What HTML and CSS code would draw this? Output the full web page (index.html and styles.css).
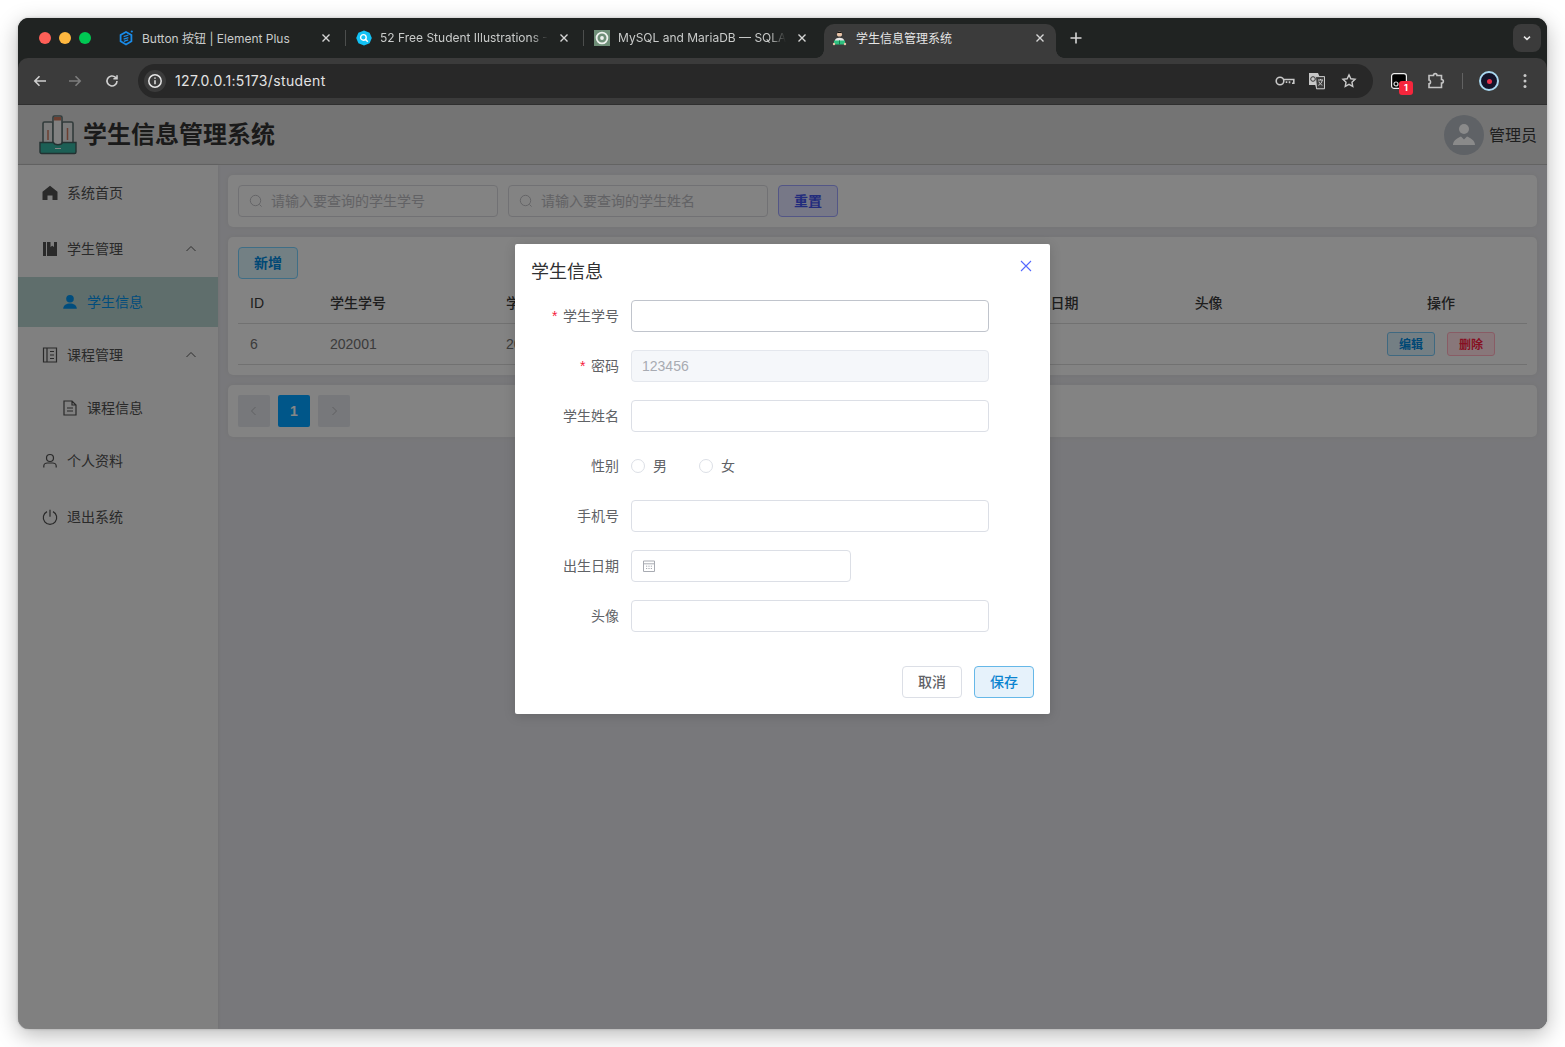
FILE: index.html
```html
<!DOCTYPE html>
<html lang="zh-CN">
<head>
<meta charset="utf-8">
<title>学生信息管理系统</title>
<link rel="stylesheet" href="styles.css">
</head>
<body>
<div class="window">
  <div class="tabstrip">
    <div class="lights"><i class="light red"></i><i class="light yellow"></i><i class="light green"></i></div>
    <div class="tab divided">
      <svg class="fav" viewBox="0 0 16 16"><path d="M8 2 13.400 5v6.200L8 14.400 2.600 11.200V5z" fill="none" stroke="#1a8be8" stroke-width="1.800"/><path d="M5.600 6.600 10.400 5M5.600 9.200l4.800-1.600M5.800 11.400l4.400-1.600" stroke="#1a8be8" stroke-width="1.300" fill="none"/><circle cx="13.800" cy="1.500" r="1.100" fill="#1a8be8"/></svg>
      <span class="tab-title">Button 按钮 | Element Plus</span>
      <svg class="tab-x" viewBox="0 0 16 16"><path d="M4.500 4.500l7 7M11.500 4.500l-7 7"/></svg>
    </div>
    <div class="tab divided">
      <svg class="fav" viewBox="0 0 16 16"><path d="M8 .5 13.600 2.800 15.800 8 13.600 13.200 8 15.500 2.400 13.200.2 8 2.400 2.800z" fill="#12c2f5"/><circle cx="7.400" cy="7.400" r="2.800" fill="none" stroke="#fff" stroke-width="1.400"/><path d="M9.600 9.600l2.200 2.200" stroke="#fff" stroke-width="1.400"/></svg>
      <span class="tab-title fade">52 Free Student Illustrations - Download</span>
      <svg class="tab-x" viewBox="0 0 16 16"><path d="M4.500 4.500l7 7M11.500 4.500l-7 7"/></svg>
    </div>
    <div class="tab">
      <svg class="fav" viewBox="0 0 16 16"><rect width="16" height="16" fill="#6f8f78"/><circle cx="8" cy="8" r="5.400" fill="none" stroke="#eef2ee" stroke-width="1.800"/><circle cx="8" cy="8" r="1.900" fill="#eef2ee"/></svg>
      <span class="tab-title fade">MySQL and MariaDB — SQLAlchemy</span>
      <svg class="tab-x" viewBox="0 0 16 16"><path d="M4.500 4.500l7 7M11.500 4.500l-7 7"/></svg>
    </div>
    <div class="tab active">
      <svg class="fav" viewBox="0 0 16 16"><circle cx="7.500" cy="4" r="2.600" fill="#e8c4a8"/><path d="M4.600 3.600C4.600 1 10.400 1 10.400 3.600L9 2.900H6z" fill="#111"/><path d="M3 10c1-3 8-3 9 0v1H3z" fill="#e8e8e8"/><path d="M2 10.400h11v4H2z" fill="#2fbf7f"/><path d="M7.500 10.400v4" stroke="#147a4c"/><circle cx="2" cy="14" r="1.200" fill="#e8c4a8"/><circle cx="13" cy="14" r="1.200" fill="#e8c4a8"/></svg>
      <span class="tab-title">学生信息管理系统</span>
      <svg class="tab-x" viewBox="0 0 16 16"><path d="M4.500 4.500l7 7M11.500 4.500l-7 7"/></svg>
    </div>
    <svg class="newtab" viewBox="0 0 16 16"><path d="M8 2.500v11M2.500 8h11"/></svg>
    <div class="tabsearch"><svg viewBox="0 0 12 12"><path d="M3 4.600 6 7.400l3-2.800"/></svg></div>
  </div>

  <div class="toolbar">
    <svg class="tool first" viewBox="0 0 16 16"><path d="M14 8H3M7.500 3.200 2.800 8l4.700 4.800"/></svg>
    <svg class="tool dim" viewBox="0 0 16 16"><path d="M2 8h11M8.500 3.200 13.200 8l-4.700 4.800"/></svg>
    <svg class="tool" viewBox="0 0 16 16"><path d="M13 8a5 5 0 1 1-1.500-3.600L13 5.800M13 2.200v3.600H9.400"/></svg>
    <div class="omnibox">
      <span class="site-info"><svg viewBox="0 0 16 16"><circle cx="8" cy="8" r="6.200"/><path d="M8 7.200v4M8 4.400v1.400"/></svg></span>
      <span class="url">127.0.0.1:5173/student</span>
      <svg class="omni-key" viewBox="0 0 20 12"><circle cx="5" cy="6" r="3.800"/><path d="M8.800 4.500H18.800V8.200H17M14.500 8.200V6.200M11.500 8V6.200"/></svg>
      <svg class="omni-tr" viewBox="0 0 18 18"><path d="M1 1h9l1.500 3.600H16.500v12.200H8.500L7.300 13H1z" fill="#c8c8c8" stroke="none"/><path d="M7.500 4.600h9v12.200H8.500z" fill="#3b3b3b" stroke="#c8c8c8"/><circle cx="5" cy="7" r="2.300" stroke="#333" fill="none"/><path d="M10 8h5M12.500 7v1M14.300 8c-.5 3-2.300 4.600-4 5.300M10.900 9.600c.8 2 2 3 3.500 3.600" stroke="#c8c8c8" stroke-width="1" fill="none"/></svg>
      <svg class="omni-star" viewBox="0 0 16 16"><path d="M8 1.900l1.850 3.900 4.200.55-3.100 2.900.8 4.200L8 11.400l-3.750 2.050.8-4.200-3.100-2.900 4.200-.55z"/></svg>
    </div>
    <div class="ext">
      <svg class="ext-icon" viewBox="0 0 16 16"><rect x=".6" y=".6" width="14.800" height="14.800" rx="2.500" fill="#000" stroke="#eee" stroke-width="1.200"/><circle cx="5" cy="11" r="2" fill="none" stroke="#ddd" stroke-width="1.200"/></svg>
      <span class="badge">1</span>
    </div>
    <svg class="puzzle" viewBox="0 0 18 18"><path d="M2 3.500h4.500C6.500 1 10 1 10 3.500H14.500V7.500C17 7.500 17 11 14.500 11V15.500H2V11.800C4 11.800 4 8 2 8z"/></svg>
    <i class="tool-sep"></i>
    <span class="profile"><i></i></span>
    <svg class="kebab" viewBox="0 0 4 16"><circle cx="2" cy="2.500" r="1.500"/><circle cx="2" cy="8" r="1.500"/><circle cx="2" cy="13.500" r="1.500"/></svg>
  </div>

  <div class="app">
    <header class="app-header">
      <svg class="logo" viewBox="0 0 38 40">
        <g stroke="#546464" stroke-width="1.600">
          <rect x="4" y="7" width="10" height="24" rx="1.500" fill="#cdcdcd"/>
          <rect x="23" y="7" width="11" height="24" rx="1.500" fill="#cdcdcd"/>
          <rect x="14" y="1" width="9" height="30" rx="1.500" fill="#d8d8d8"/>
        </g>
        <rect x="15" y="2" width="7" height="3.500" fill="#b26a52"/>
        <path d="M9 15v10M28.500 13v12" stroke="#b26a52" stroke-width="1.500"/>
        <path d="M1 27.500h13.500c1 3 8 3 9 0H37V37a1.500 1.500 0 0 1-1.500 1.500h-33A1.500 1.500 0 0 1 1 37z" fill="#2f9f8e" stroke="#3a5252" stroke-width="1.400"/>
        <path d="M16 33.500h6" stroke="#dcdcdc" stroke-width="1.200"/>
      </svg>
      <h1 class="app-title">学生信息管理系统</h1>
      <div class="user">
        <span class="avatar"><svg viewBox="0 0 40 40"><circle cx="20" cy="14" r="5" /><path d="M9 30c0-5 5-7 8-8.500l3 3 3-3c3 1.500 8 3.500 8 8.500z"/></svg></span>
        <span class="user-name">管理员</span>
      </div>
    </header>
    <div class="app-body">
      <nav class="sidebar">
        <a class="menu-item">
          <svg class="mi" viewBox="0 0 16 16"><path class="solid" d="M8 .8 15.500 6.800V15h-5v-4.500h-5V15h-5V6.800z"/></svg>
          <span>系统首页</span>
        </a>
        <a class="menu-item">
          <svg class="mi" viewBox="0 0 16 16"><path class="solid" d="M1 1h3v14H1zM5 1h3.500v5l1.750-1.200L12 6V1h3v14H5z"/></svg>
          <span>学生管理</span>
          <svg class="arrow" viewBox="0 0 12 12"><path d="M1.500 8 6 3.500 10.500 8"/></svg>
        </a>
        <a class="menu-item sub active">
          <svg class="mi" viewBox="0 0 16 16"><circle class="solid" cx="8" cy="4.800" r="3.800"/><path class="solid" d="M1.200 14.800c0-7 13.600-7 13.600 0z"/></svg>
          <span>学生信息</span>
        </a>
        <a class="menu-item">
          <svg class="mi" viewBox="0 0 16 16"><path class="line" d="M1.500 1h13v14h-13zM5 1v14M8 4.500h4M8 8h4M8 11.500h4"/></svg>
          <span>课程管理</span>
          <svg class="arrow" viewBox="0 0 12 12"><path d="M1.500 8 6 3.500 10.500 8"/></svg>
        </a>
        <a class="menu-item sub">
          <svg class="mi" viewBox="0 0 16 16"><path class="line" d="M2 1h8l4 4v10H2zM10 1v4h4M5 8h6M5 11h6"/></svg>
          <span>课程信息</span>
        </a>
        <a class="menu-item">
          <svg class="mi" viewBox="0 0 16 16"><circle class="line" cx="8" cy="5" r="3.500"/><path class="line" d="M1.800 14.500V13c0-2 2-3 3.500-3h5.400c1.500 0 3.500 1 3.500 3v1.500"/></svg>
          <span>个人资料</span>
        </a>
        <a class="menu-item">
          <svg class="mi" viewBox="0 0 16 16"><path class="line" d="M5 2.600a6.700 6.700 0 1 0 6 0M8 .8v7"/></svg>
          <span>退出系统</span>
        </a>
      </nav>
      <main class="content">
        <section class="card search-card">
          <label class="search-box">
            <svg viewBox="0 0 14 14"><circle cx="6.500" cy="6.500" r="5.200"/><path d="M10.400 10.400l2.200 2.200"/></svg>
            <span>请输入要查询的学生学号</span>
          </label>
          <label class="search-box">
            <svg viewBox="0 0 14 14"><circle cx="6.500" cy="6.500" r="5.200"/><path d="M10.400 10.400l2.200 2.200"/></svg>
            <span>请输入要查询的学生姓名</span>
          </label>
          <button class="btn-reset">重置</button>
        </section>
        <section class="card table-card">
          <button class="btn-add">新增</button>
          <table class="grid">
            <colgroup><col class="c-id"><col class="c-no"><col class="c-n"><col class="c-n"><col class="c-n"><col class="c-n"><col class="c-n"><col class="c-n"></colgroup>
            <thead>
              <tr><th class="latin">ID</th><th>学生学号</th><th>学生姓名</th><th>性别</th><th>手机号</th><th>出生日期</th><th>头像</th><th class="center">操作</th></tr>
            </thead>
            <tbody>
              <tr><td>6</td><td>202001</td><td>202001</td><td></td><td></td><td></td><td></td>
                <td class="center"><button class="mini edit">编辑</button><button class="mini del">删除</button></td></tr>
            </tbody>
          </table>
        </section>
        <section class="card pager-card">
          <span class="page-btn"><svg viewBox="0 0 12 12"><path d="M7.500 2 3.500 6l4 4"/></svg></span>
          <span class="page-btn current">1</span>
          <span class="page-btn"><svg viewBox="0 0 12 12"><path d="M4.500 2l4 4-4 4"/></svg></span>
        </section>
      </main>
    </div>
    <div class="overlay">
      <div class="dialog">
        <div class="dialog-head">
          <span class="dialog-title">学生信息</span>
          <svg class="dialog-close" viewBox="0 0 12 12"><path d="M1 1l10 10M11 1 1 11"/></svg>
        </div>
        <form class="form">
          <div class="row"><span class="label req">学生学号</span><span class="field focus"></span></div>
          <div class="row"><span class="label req">密码</span><span class="field disabled">123456</span></div>
          <div class="row"><span class="label">学生姓名</span><span class="field"></span></div>
          <div class="row"><span class="label">性别</span>
            <span class="radios"><span class="radio"><i></i><b>男</b></span><span class="radio"><i></i><b>女</b></span></span>
          </div>
          <div class="row"><span class="label">手机号</span><span class="field"></span></div>
          <div class="row"><span class="label">出生日期</span>
            <span class="field date"><svg viewBox="0 0 14 14"><path d="M1.500 2h11v10.500h-11zM1.500 4.800h11"/><path class="dots" d="M4 7.200h1.200M6.400 7.200h1.200M8.800 7.200H10M4 9.500h1.200M6.400 9.500h1.200M8.800 9.500H10"/></svg></span>
          </div>
          <div class="row"><span class="label">头像</span><span class="field"></span></div>
        </form>
        <div class="dialog-foot">
          <button class="btn-cancel">取消</button>
          <button class="btn-save">保存</button>
        </div>
      </div>
    </div>
  </div>
</div>
</body>
</html>
```

FILE: styles.css
```css
* { box-sizing: border-box; }
html, body { margin: 0; height: 100%; background: #fff; overflow: hidden; }
body { padding: 18px; font-family: "Liberation Sans", "Noto Sans CJK SC", sans-serif; font-size: 14px; }
button { font-family: inherit; cursor: pointer; }
svg { display: block; flex: none; }

.window { width: 1529px; height: 1011px; border-radius: 11px; overflow: hidden; display: flex; flex-direction: column; box-shadow: 0 6px 22px rgba(0,0,0,.28), 0 0 3px rgba(0,0,0,.2); background: #202322; }

/* tab strip */
.tabstrip { height: 40px; flex: none; display: flex; align-items: flex-start; background: #202322; padding-top: 6px; font-family: Inter, "Noto Sans CJK SC", sans-serif; }
.lights { width: 92px; height: 28px; padding-left: 21px; display: flex; align-items: center; gap: 8px; }
.light { width: 12px; height: 12px; border-radius: 50%; }
.red { background: #ff5f57; } .yellow { background: #ffb83f; } .green { background: #00c853; }
.tab { position: relative; width: 232px; height: 28px; margin-right: 6px; padding: 0 8px; display: flex; align-items: center; gap: 8px; color: #c9cbca; font-size: 12px; }
.fav { width: 16px; height: 16px; }
.tab-title { flex: 1; white-space: nowrap; overflow: hidden; padding-bottom: 2px; }
.tab-title.fade { -webkit-mask-image: linear-gradient(90deg, #000 90%, transparent 100%); mask-image: linear-gradient(90deg, #000 90%, transparent 100%); }
.tab-x { width: 16px; height: 16px; fill: none; stroke: #d6d6d6; stroke-width: 1.400; }
.divided::after { content: ""; position: absolute; right: -4px; top: 6px; width: 1px; height: 16px; background: #4c4e4d; }
.tab.active { height: 34px; padding-bottom: 6px; margin-right: 12px; background: #3b3b3b; color: #e6e6e6; border-radius: 10px 10px 0 0; }
.tab.active::before, .tab.active::after { content: ""; position: absolute; bottom: 0; width: 8px; height: 8px; }
.tab.active::before { left: -8px; background: radial-gradient(circle at 0 0, #202322 7.500px, #3b3b3b 8px); }
.tab.active::after { right: -8px; background: radial-gradient(circle at 100% 0, #202322 7.500px, #3b3b3b 8px); }
.newtab { width: 16px; height: 16px; margin-top: 6px; fill: none; stroke: #d6d6d6; stroke-width: 1.600; }
.tabsearch { margin-left: auto; margin-right: 6px; width: 28px; height: 28px; border-radius: 8px; background: #3b3b3b; display: flex; align-items: center; justify-content: center; }
.tabsearch svg { width: 12px; height: 12px; fill: none; stroke: #e6e6e6; stroke-width: 1.500; }

/* toolbar */
.toolbar { height: 47px; flex: none; display: flex; align-items: center; padding: 0 14px; background: #3b3b3b; border-radius: 10px 10px 0 0; border-bottom: 1px solid #2f2f2f; position: relative; }
.tool { width: 16px; height: 16px; margin-right: 19px; fill: none; stroke: #cfcfcf; stroke-width: 1.600; }
.tool.dim { stroke: #7d7d7d; margin-right: 21px; }
.tool:nth-of-type(3) { margin-right: 18px; }
.omnibox { width: 1235px; height: 34px; border-radius: 17px; background: #282828; display: flex; align-items: center; padding-left: 6px; padding-right: 16px; }
.site-info { width: 22px; height: 22px; border-radius: 50%; background: #3b3b3b; display: flex; align-items: center; justify-content: center; margin-right: 9px; }
.site-info svg { width: 16px; height: 16px; fill: none; stroke: #e6e6e6; stroke-width: 1.500; }
.url { flex: 1; color: #e3e3e3; font: 14px Inter, sans-serif; letter-spacing: .36px; padding-bottom: 2px; }
.omni-key { width: 20px; height: 12px; fill: none; stroke: #c8c8c8; stroke-width: 1.600; margin-right: 13px; }
.omni-tr { width: 18px; height: 18px; margin-right: 15px; }
.omni-star { width: 16px; height: 16px; fill: none; stroke: #c8c8c8; stroke-width: 1.400; }
.ext { position: relative; width: 16px; height: 16px; margin-left: 18px; }
.ext-icon { width: 16px; height: 16px; }
.badge { position: absolute; left: 8px; top: 8px; width: 14px; height: 14px; border-radius: 3px; background: #f5263c; color: #fff; font: 700 9px/14px Inter, sans-serif; text-align: center; }
.puzzle { width: 18px; height: 18px; margin-left: 20px; fill: none; stroke: #c4c4c4; stroke-width: 1.600; }
.tool-sep { width: 1px; height: 16px; background: #626262; margin-left: 17px; }
.profile { width: 20px; height: 20px; margin-left: 16px; border-radius: 50%; background: #14142a; border: 2px solid #a8d8f0; display: flex; align-items: center; justify-content: center; }
.profile i { width: 5px; height: 5px; border-radius: 50%; background: #e5304a; }
.kebab { width: 4px; height: 16px; margin-left: 24px; fill: #c8c8c8; }

/* app */
.app { position: relative; flex: 1; display: flex; flex-direction: column; background: #c9c9cd; min-height: 0; }
.app-header { height: 60px; flex: none; display: flex; align-items: center; padding: 0 10px 0 21px; background: #c1c1c1; border-bottom: 1px solid #a6a6a6; }
.logo { width: 38px; height: 40px; }
.app-title { margin: 0 0 0 6px; font-size: 24px; line-height: 32px; font-weight: 700; color: #2c2c2c; }
.user { margin-left: auto; display: flex; align-items: center; gap: 5px; }
.avatar { width: 40px; height: 40px; border-radius: 50%; background: #9ea3aa; }
.avatar svg { width: 40px; height: 40px; fill: #e6e6e6; }
.user-name { font-size: 16px; color: #333; padding-bottom: 2px; }

.app-body { flex: 1; display: flex; min-height: 0; }
.sidebar { width: 200px; flex: none; background: #d5d5d5; box-shadow: 1px 0 3px rgba(0,0,0,.06); }
.menu-item { height: 56px; display: flex; align-items: center; padding: 0 21px 0 24px; color: #464646; gap: 9px; }
.menu-item span { padding-bottom: 2px; }
.menu-item.sub { height: 50px; padding-left: 44px; }
.menu-item.active { background: #9eb7b4; color: #0080d0; }
.mi { width: 16px; height: 16px; }
.mi .solid { fill: currentColor; }
.mi .line { fill: none; stroke: currentColor; stroke-width: 1.200; }
.arrow { width: 12px; height: 12px; margin-left: auto; fill: none; stroke: #4e4e4e; stroke-width: 1; }

.content { flex: 1; min-width: 0; padding: 10px; display: flex; flex-direction: column; gap: 10px; }
.card { background: #dadada; border-radius: 5px; padding: 10px; box-shadow: 0 0 6px rgba(0,0,0,.05); }
.search-card { display: flex; gap: 10px; }
.search-box { width: 260px; height: 32px; border: 1px solid #bdbdc1; border-radius: 4px; display: flex; align-items: center; padding-left: 10px; gap: 8px; color: #a4a4a8; }
.search-box span { padding-bottom: 2px; }
.search-box svg { width: 14px; height: 14px; fill: none; stroke: #a8a8ac; stroke-width: 1; }
.btn-reset { width: 60px; height: 32px; border: 1px solid #8a90e0; border-radius: 4px; background: #c6c8e2; color: #3a4ad0; font-size: 14px; font-weight: 700; padding: 0 0 2px; }
.btn-add { display: block; width: 60px; height: 32px; border: 1px solid #6ab8e0; border-radius: 4px; background: #c0d6dc; color: #0078c4; font-size: 14px; font-weight: 700; padding: 0 0 2px; }
.grid { width: 100%; table-layout: fixed; border-collapse: collapse; margin-top: 4px; }
.c-id { width: 80px; } .c-no { width: 176px; } .c-n { width: 172.170px; }
.grid th { height: 40px; padding: 0 12px 2px; text-align: left; color: #323232; font-size: 14px; font-weight: 500; border-bottom: 1px solid #bcbcbc; }
.grid th.latin { padding-bottom: 0; font-weight: 400; }
.grid td { height: 41px; padding: 0 12px; color: #646464; border-bottom: 1px solid #bcbcbc; white-space: nowrap; }
.grid .center { text-align: center; }
.mini { width: 48px; height: 24px; border-radius: 3px; font-size: 12px; padding: 0 0 1px; font-weight: 700; vertical-align: middle; }
.edit { border: 1px solid #6ab0d8; background: #c2d4dc; color: #0078c4; margin-right: 12px; }
.del { border: 1px solid #e59aa9; background: #e3c6cc; color: #e01a3a; }
.pager-card { display: flex; gap: 8px; }
.page-btn { width: 32px; height: 32px; border-radius: 2px; background: #c6c8cd; display: flex; align-items: center; justify-content: center; color: #a0a0a0; }
.page-btn svg { width: 12px; height: 12px; fill: none; stroke: #a0a0a4; stroke-width: 1; }
.page-btn.current { background: #0090e4; color: #e0e0e0; font-weight: 700; }

/* dialog */
.overlay { position: absolute; inset: 0; background: rgba(0,0,0,.4); display: flex; justify-content: center; padding-top: 139px; align-items: flex-start; }
.dialog { width: 535px; height: 470px; background: #fff; border-radius: 2px; box-shadow: 0 2px 12px rgba(0,0,0,.15); display: flex; flex-direction: column; }
.dialog-head { height: 56px; flex: none; display: flex; justify-content: space-between; padding: 16px 18px 0 16px; }
.dialog-title { font-size: 18px; line-height: 24px; color: #303133; }
.dialog-close { width: 12px; height: 12px; fill: none; stroke: #5468ff; stroke-width: 1.100; }
.row { display: flex; align-items: center; height: 32px; margin-bottom: 18px; }
.label { width: 104px; margin-right: 12px; padding-bottom: 2px; text-align: right; color: #606266; }
.req::before { content: "*"; margin-right: 5.600px; color: #f5203c; }
.field { width: 358px; height: 32px; border: 1px solid #dcdfe6; border-radius: 4px; display: flex; align-items: center; padding: 0 10px; }
.field.focus { border-color: #c0c4cc; }
.field.disabled { background: #f5f7fa; border-color: #e4e7ed; color: #a8abb2; }
.field.date { width: 220px; }
.field.date svg { width: 14px; height: 14px; fill: none; stroke: #a8abb2; stroke-width: 1; }
.radios { display: flex; gap: 32px; color: #606266; }
.radio { display: flex; align-items: center; gap: 8px; }
.radio b { font-weight: 400; padding-bottom: 2px; }
.radio i { width: 14px; height: 14px; border-radius: 50%; border: 1px solid #dcdfe6; }
.dialog-foot { margin-top: auto; padding: 0 16px 16px; display: flex; justify-content: flex-end; gap: 12px; }
.btn-cancel, .btn-save { width: 60px; height: 32px; border-radius: 4px; font-size: 14px; padding: 0 0 2px; font-weight: 500; }
.btn-cancel { background: #fff; border: 1px solid #dcdfe6; color: #606266; }
.btn-save { background: #e6f2fb; border: 1px solid #66b8e8; color: #0a84d0; }
```
